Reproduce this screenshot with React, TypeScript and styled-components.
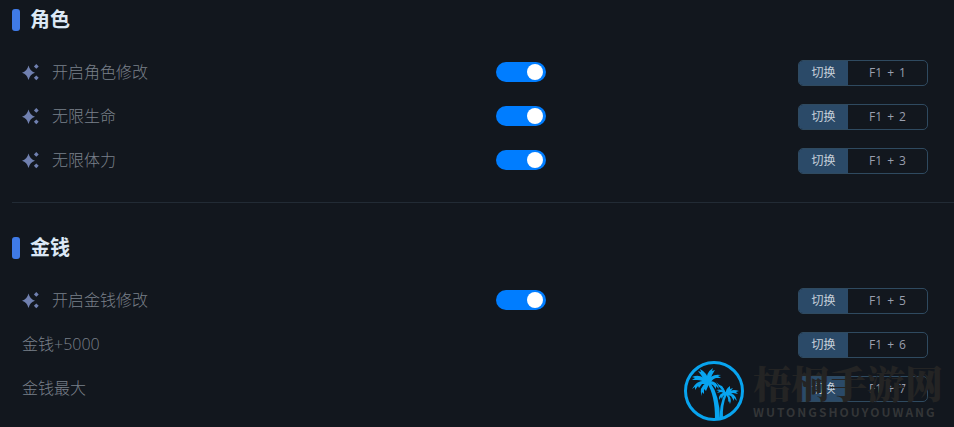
import React, { useState } from 'react';
import styled, { createGlobalStyle } from 'styled-components';

const GlobalStyle = createGlobalStyle`
  * { box-sizing: border-box; }
  body {
    margin: 0;
    background: #12171e;
    font-family: "Open Sans", "Noto Sans CJK SC", sans-serif;
  }
`;

const Page = styled.main`
  position: relative;
  padding-left: 12px;
  padding-bottom: 17px;
  overflow: hidden;
`;

const Section = styled.section`
  padding-bottom: 20px;

  & + & {
    border-top: 1px solid #222b35;
    padding-top: 25px;
    padding-bottom: 0;
  }
`;

const Heading = styled.h2`
  display: flex;
  align-items: center;
  gap: 10px;
  height: 40px;
  margin: 0 0 10px;
  color: #dce8f5;
  font-size: 20px;
  line-height: 28px;
  font-weight: 700;

  &::before {
    content: "";
    width: 8px;
    height: 22px;
    border-radius: 3px;
    background: #3f7ae6;
  }
`;

const Row = styled.div`
  display: grid;
  grid-template-columns: minmax(0, 11fr) minmax(0, 7fr) 130px;
  align-items: center;
  height: 44px;
  padding: 0 26px 0 10px;
`;

const Label = styled.label`
  display: flex;
  align-items: center;
  gap: 12px;
  color: #7a808a;
  font-size: 16px;
  line-height: 24px;
  font-weight: 300;
`;

const SparkleIcon = styled.svg`
  width: 18px;
  height: 18px;
  fill: #7080b0;
`;

const Switch = styled.input`
  appearance: none;
  display: flex;
  align-items: center;
  width: 50px;
  height: 20px;
  margin: 0;
  padding: 0 3px;
  border-radius: 10px;
  background: #333c48;
  cursor: pointer;

  &::before {
    content: "";
    width: 16px;
    height: 16px;
    border-radius: 50%;
    background: #fff;
  }

  &:checked {
    justify-content: flex-end;
    background: #007dff;
  }
`;

const Hotkey = styled.div`
  grid-column: 3;
  display: flex;
  height: 26px;
  margin-top: 2px;
  border: 1px solid #2f4a60;
  border-radius: 5px;
  overflow: hidden;
  font-size: 12px;
`;

const ToggleButton = styled.button`
  width: 49px;
  padding: 0;
  border: 0;
  background: #2b4a68;
  color: #c6d0da;
  font: inherit;
  line-height: 24px;
  cursor: pointer;
`;

const Keys = styled.kbd`
  flex: 1;
  display: flex;
  align-items: center;
  justify-content: center;
  gap: 5px;
  color: #9a9fae;
  font-family: inherit;
  line-height: 24px;
`;

const Watermark = styled.aside`
  position: absolute;
  right: 11px;
  bottom: 5px;
  display: flex;
  align-items: center;
  gap: 8px;
  pointer-events: none;
`;

const PalmLogo = styled.svg`
  width: 62px;
  height: 62px;
  fill: #08a4ef;
`;

const WatermarkText = styled.div`
  display: flex;
  flex-direction: column;
  color: #242424;
`;

const WatermarkName = styled.span`
  font-family: "Noto Serif CJK SC", "Noto Sans CJK SC", serif;
  font-size: 38px;
  line-height: 42px;
  font-weight: 900;
`;

const WatermarkLatin = styled.span`
  color: #333537;
  font-family: "Noto Sans CJK SC", sans-serif;
  font-size: 12px;
  line-height: 18px;
  font-weight: 700;
  letter-spacing: 2px;
`;

function Sparkle() {
  return (
    <SparkleIcon viewBox="0 0 18 18" aria-hidden="true">
      <path d="M6.5 2.5Q8 8.4 13 9.8Q8 11.2 6.5 17Q5 11.2 0 9.8Q5 8.4 6.5 2.5Z" />
      <path d="M14.3 1L16.7 3.4L14.3 5.8L11.9 3.4Z" />
      <path d="M14.3 12.4L16.7 14.8L14.3 17.2L11.9 14.8Z" />
    </SparkleIcon>
  );
}

function Palms() {
  return (
    <PalmLogo viewBox="0 0 62 62" aria-hidden="true">
      <circle cx="31" cy="31" r="28.5" fill="none" stroke="#08a4ef" strokeWidth="3" />
      <path d="M24 23Q32 35 32 59H37Q37 36 27 22Z" />
      <path d="M42 33Q36 45 37 59H40Q39 45 44 34Z" />
      <path d="M25 23Q19 13 9 17L12 18L9 20L14 20Q19 20 25 24Z" />
      <path d="M25 21Q14 19 9 29L12 27L12 30L15 26L16 28L19 24L26 24Z" />
      <path d="M26 22Q25 13 17 9L18 12L15 11L18 15Q20 19 24 23Z" />
      <path d="M24 22Q22 13 30 8L29 11L32 10L29 15Q28 20 26 23Z" />
      <path d="M25 22Q28 13 38 15L35 16L38 18L33 18Q29 19 27 24Z" />
      <path d="M25 21Q34 20 36 29L33 26L33 29L30 25L26 24Z" />
      <path d="M24 22Q15 28 19 36L19 32L21 34L21 29L23 31L26 24Z" />
      <path d="M33 21Q35 25 39 26L41 29L36 27Z" />
      <path d="M43 33Q39 28 33 30L36 31L34 33L38 32L43 34Z" />
      <path d="M43 33Q41 27 36 26L38 29Q40 32 43 34Z" />
      <path d="M43 34Q42 29 47 26L47 29L50 28Q48 32 44 34Z" />
      <path d="M43 33Q49 28 56 31L53 32L55 34L50 33L44 35Z" />
      <path d="M43 32Q35 33 36 40L38 37L39 39L40 36L44 34Z" />
      <path d="M43 32Q53 33 54 41L51 38L51 41L48 36L44 35Z" />
      <path d="M43 33Q50 38 47 44L46 41L45 42Q46 37 42 34Z" />
    </PalmLogo>
  );
}

interface Option {
  id: string;
  name: string;
  hotkey: string;
  switchable?: boolean;
}

const groups: { title: string; options: Option[] }[] = [
  {
    title: '角色',
    options: [
      { id: 'role', name: '开启角色修改', hotkey: '1', switchable: true },
      { id: 'health', name: '无限生命', hotkey: '2', switchable: true },
      { id: 'stamina', name: '无限体力', hotkey: '3', switchable: true },
    ],
  },
  {
    title: '金钱',
    options: [
      { id: 'money', name: '开启金钱修改', hotkey: '5', switchable: true },
      { id: 'money-add', name: '金钱+5000', hotkey: '6' },
      { id: 'money-max', name: '金钱最大', hotkey: '7' },
    ],
  },
];

function OptionRow({ option }: { option: Option }) {
  const [on, setOn] = useState(true);
  const controlId = option.switchable ? option.id : `${option.id}-button`;
  return (
    <Row>
      <Label htmlFor={controlId}>
        {option.switchable && <Sparkle />}
        {option.name}
      </Label>
      {option.switchable && (
        <Switch
          id={option.id}
          type="checkbox"
          role="switch"
          checked={on}
          onChange={() => setOn(!on)}
        />
      )}
      <Hotkey>
        <ToggleButton id={`${option.id}-button`} type="button" onClick={() => setOn(!on)}>
          切换
        </ToggleButton>
        <Keys>
          <span>F1</span>
          <span>+</span>
          <span>{option.hotkey}</span>
        </Keys>
      </Hotkey>
    </Row>
  );
}

export default function App() {
  return (
    <>
      <GlobalStyle />
      <Page>
        {groups.map((group) => (
          <Section key={group.title}>
            <Heading>{group.title}</Heading>
            {group.options.map((option) => (
              <OptionRow key={option.id} option={option} />
            ))}
          </Section>
        ))}
        <Watermark>
          <Palms />
          <WatermarkText>
            <WatermarkName>梧桐手游网</WatermarkName>
            <WatermarkLatin>WUTONGSHOUYOUWANG</WatermarkLatin>
          </WatermarkText>
        </Watermark>
      </Page>
    </>
  );
}
